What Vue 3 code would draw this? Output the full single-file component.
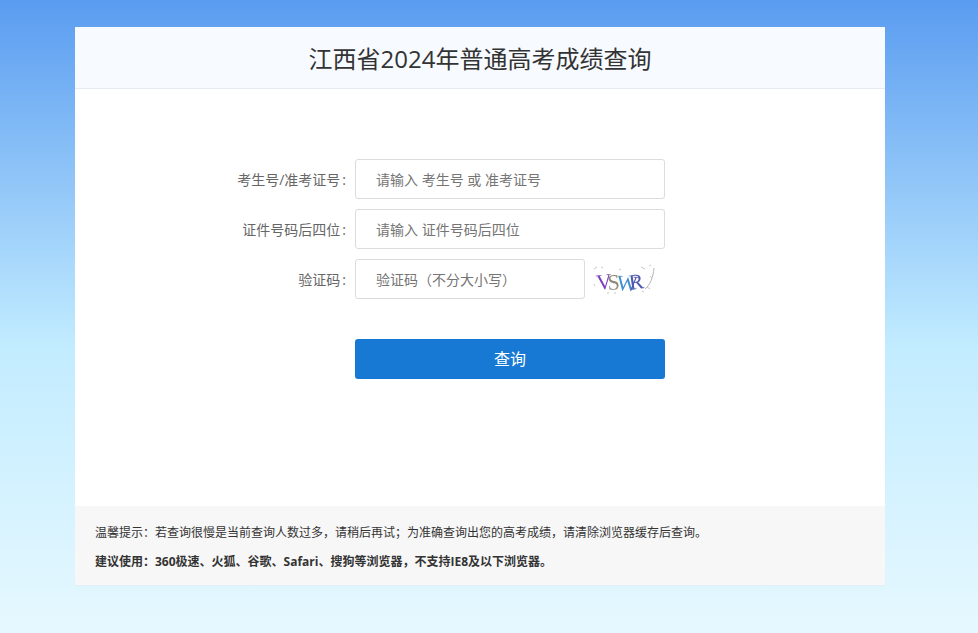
<script setup>
const rows = [
  { label: '考生号/准考证号', placeholder: '请输入 考生号 或 准考证号' },
  { label: '证件号码后四位', placeholder: '请输入 证件号码后四位' },
]
</script>

<template>
  <div class="page">
    <div class="card">
      <header class="head">江西省2024年普通高考成绩查询</header>
      <main class="body">
        <form class="form" @submit.prevent>
          <div v-for="r in rows" :key="r.label" class="row">
            <label class="label">{{ r.label }}<span class="colon">:</span></label>
            <input class="input" type="text" :placeholder="r.placeholder" />
          </div>
          <div class="row">
            <label class="label">验证码<span class="colon">:</span></label>
            <input class="input short" type="text" placeholder="验证码（不分大小写）" />
            <svg class="captcha" width="70" height="34" viewBox="0 0 70 34">
              <defs>
                <linearGradient id="codeFill" gradientUnits="userSpaceOnUse" x1="0" y1="0" x2="70" y2="0">
                  <stop offset="0.28" stop-color="#7a3fc0" />
                  <stop offset="0.28" stop-color="#8f8a78" />
                  <stop offset="0.43" stop-color="#8f8a78" />
                  <stop offset="0.43" stop-color="#3f8fd4" />
                  <stop offset="0.6" stop-color="#3f8fd4" />
                  <stop offset="0.6" stop-color="#4f58ad" />
                </linearGradient>
              </defs>
              <g fill="none" stroke="#b9b9b9" stroke-width=".8">
                <path d="M5 7l3-2M12 5l2 1M30 7l2 1M52 5l4 2M60 4l2-1" />
                <path d="M56 27c5-4 8-11 9-21" stroke="#a5a5a5" />
                <path d="M58 25l3 2M53 29l2 1M18 31l2 0M25 31l2 0M61 14l2 2M5 22l1 2" />
              </g>
              <text x="8" y="28" dx="0 -5 -4 -7" rotate="-6 -4 4 -8" class="code" fill="url(#codeFill)">VSWR</text>
            </svg>
          </div>
          <button class="btn" type="submit">查询</button>
        </form>
      </main>
      <footer class="foot">
        <p class="tip">温馨提示：若查询很慢是当前查询人数过多，请稍后再试；为准确查询出您的高考成绩，请清除浏览器缓存后查询。</p>
        <p class="tip bold">建议使用：360极速、火狐、谷歌、Safari、搜狗等浏览器，不支持IE8及以下浏览器。</p>
      </footer>
    </div>
  </div>
</template>

<style scoped>
.page {
  height: 633px;
  box-sizing: border-box;
  padding: 27px 18px 0 0;
  overflow: hidden;
  background: linear-gradient(180deg, #5a9cf0 0%, #c2ecff 55%, #e6f8ff 100%);
  font-family: "Open Sans", "Noto Sans CJK SC", sans-serif;
}
.card {
  width: 810px;
  margin: 0 auto;
  background: #fff;
  border-bottom: 1px solid #e3eef8;
}
.head {
  height: 61px;
  line-height: 64px;
  text-align: center;
  font-size: 24px;
  color: #333;
  background: #f7faff;
  border-bottom: 1px solid #e6ebf3;
}
.body {
  height: 417px;
  box-sizing: border-box;
  padding-top: 70px;
}
.form {
  display: flex;
  flex-direction: column;
  gap: 10px;
}
.row {
  display: flex;
  align-items: center;
  height: 40px;
}
.label {
  width: 272px;
  margin-right: 8px;
  text-align: right;
  font-size: 14px;
  color: #666;
}
.colon {
  margin: 0 1px 0 2px;
}
.input {
  width: 310px;
  height: 40px;
  box-sizing: border-box;
  padding: 0 21px 0 20px;
  border: 1px solid #dcdcdc;
  border-radius: 3px;
  outline: none;
  font: 14px "Open Sans", "Noto Sans CJK SC", sans-serif;
  background: #fff;
}
.input::placeholder {
  color: #757575;
}
.short {
  width: 230px;
}
.captcha {
  margin-left: 4px;
}
.code {
  font-family: "Liberation Serif", serif;
  font-size: 22px;
  filter: blur(0.3px);
}
.btn {
  width: 310px;
  height: 40px;
  margin: 30px 0 0 280px;
  padding: 0 0 2px;
  border: 0;
  border-radius: 3px;
  background: #1779d3;
  color: #fff;
  font: 16px "Open Sans", "Noto Sans CJK SC", sans-serif;
}
.foot {
  height: 79px;
  box-sizing: border-box;
  padding: 18px 20px 0;
  background: #f7f7f7;
}
.tip {
  margin: 0 0 11px;
  font-size: 12px;
  line-height: 18px;
  color: #333;
}
.bold {
  font-weight: 700;
}
</style>
